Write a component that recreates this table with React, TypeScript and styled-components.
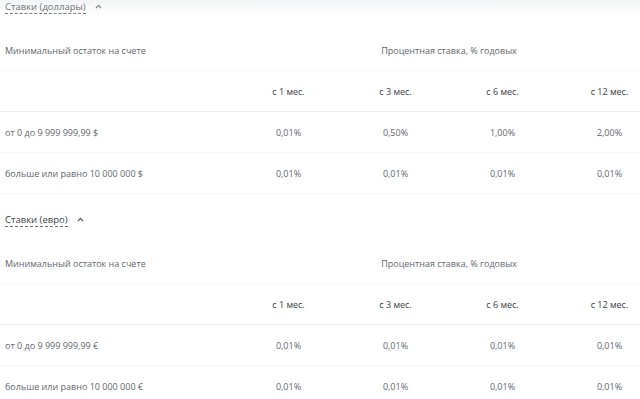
import styled, { createGlobalStyle } from "styled-components";

const GlobalStyle = createGlobalStyle`
  html, body {
    margin: 0;
    padding: 0;
    background: #ffffff;
    overflow: hidden;
  }
  body {
    font-family: "Open Sans", "Noto Sans", sans-serif;
    -webkit-font-smoothing: antialiased;
  }
`;

const Page = styled.div`
  position: relative;
  width: 640px;
  height: 399px;
  overflow: hidden;
`;

// shadow of the sticky header that sits just above the visible area
const TopShade = styled.div`
  position: absolute;
  top: 0;
  left: 0;
  right: 0;
  height: 16px;
  background: linear-gradient(rgba(232, 235, 238, 0.55), rgba(255, 255, 255, 0));
  pointer-events: none;
`;

const Content = styled.div`
  margin-top: -19px;
  width: 664px;
`;

const Section = styled.section`
  display: flex;
  flex-direction: column;
`;

const TitleBar = styled.div`
  height: 49px;
  display: flex;
  align-items: center;
  gap: 9px;
  padding-left: 5px;
  padding-top: 4px;
  box-sizing: border-box;
`;

const Title = styled.span`
  font-size: 9.5px;
  line-height: 12px;
  color: #3a3d42;
  border-bottom: 1px dashed #6f7378;
`;

const Chevron = styled.svg`
  width: 7px;
  height: 5px;
  margin-top: -2px;
`;

const Table = styled.div`
  display: grid;
  grid-template-columns: 235px repeat(4, 107px);
  grid-auto-rows: 41px;
`;

const Cell = styled.div<{ $align?: "left" | "center"; $span?: number; $line?: string; $tone?: string }>`
  display: flex;
  align-items: center;
  justify-content: ${(p) => (p.$align === "left" ? "flex-start" : "center")};
  grid-column: ${(p) => (p.$span ? `span ${p.$span}` : "auto")};
  padding-left: ${(p) => (p.$align === "left" ? "5px" : "0")};
  font-size: 9px;
  color: ${(p) => p.$tone || "#63676c"};
  border-bottom: 1px solid ${(p) => p.$line || "#f7f7f8"};
  white-space: nowrap;
`;

const RowGroup = styled.div`
  display: contents;
`;

type Rates = { label: string; values: string[] };

const periods = ["с 1 мес.", "с 3 мес.", "с 6 мес.", "с 12 мес."];

const usd: Rates[] = [
  { label: "от 0 до 9 999 999,99 $", values: ["0,01%", "0,50%", "1,00%", "2,00%"] },
  { label: "больше или равно 10 000 000 $", values: ["0,01%", "0,01%", "0,01%", "0,01%"] },
];

const eur: Rates[] = [
  { label: "от 0 до 9 999 999,99 €", values: ["0,01%", "0,01%", "0,01%", "0,01%"] },
  { label: "больше или равно 10 000 000 €", values: ["0,01%", "0,01%", "0,01%", "0,01%"] },
];

function RateSection({ title, rows }: { title: string; rows: Rates[] }) {
  return (
    <Section>
      <TitleBar>
        <Title>{title}</Title>
        <Chevron viewBox="0 0 7 5">
          <polyline points="1,4 3.5,1.3 6,4" fill="none" stroke="#55595e" strokeWidth="1.2" />
        </Chevron>
      </TitleBar>
      <Table>
        <Cell $align="left" $line="#f8f8f9">Минимальный остаток на счете</Cell>
        <Cell $span={4} $line="#f8f8f9">Процентная ставка, % годовых</Cell>

        <Cell $line="#ececee" />
        {periods.map((p) => (
          <Cell key={p} $line="#ececee" $tone="#3d4045">
            {p}
          </Cell>
        ))}

        {rows.map((r) => (
          <RowGroup key={r.label}>
            <Cell $align="left">{r.label}</Cell>
            {r.values.map((v, i) => (
              <Cell key={i}>{v}</Cell>
            ))}
          </RowGroup>
        ))}
      </Table>
    </Section>
  );
}

export default function App() {
  return (
    <Page>
      <GlobalStyle />
      <Content>
        <RateSection title="Ставки (доллары)" rows={usd} />
        <RateSection title="Ставки (евро)" rows={eur} />
      </Content>
      <TopShade />
    </Page>
  );
}
